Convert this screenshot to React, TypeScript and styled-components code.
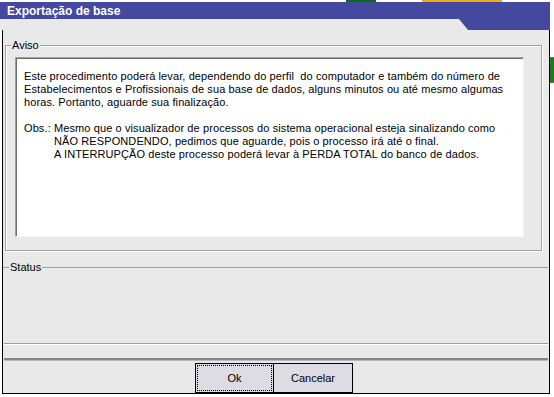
import React from 'react';
import styled, { createGlobalStyle } from 'styled-components';

const GlobalStyle = createGlobalStyle`
  html, body {
    margin: 0;
    padding: 0;
    background: #ffffff;
  }
  body {
    font-family: 'Liberation Sans', Arial, sans-serif;
    font-size: 11px;
    color: #000000;
    overflow: hidden;
  }
`;

const Screen = styled.div`
  position: relative;
  width: 554px;
  height: 397px;
  padding-top: 2px;
  box-sizing: border-box;
  background: #ffffff;
  overflow: hidden;
`;

// bits of the desktop behind the dialog
const Blot = styled.div<{ $x: number; $y: number; $w: number; $h: number; $color: string; $round?: boolean }>`
  position: absolute;
  left: ${(p) => p.$x}px;
  top: ${(p) => p.$y}px;
  width: ${(p) => p.$w}px;
  height: ${(p) => p.$h}px;
  background: ${(p) => p.$color};
  border-radius: ${(p) => (p.$round ? '50%' : '0')};
`;

const Dialog = styled.div`
  position: relative;
  z-index: 1;
  width: 550px;
  display: flex;
  flex-direction: column;
`;

const TitleBar = styled.div`
  height: 17px;
  background: #44489e;
  color: #ffffff;
  font-weight: bold;
  font-size: 12px;
  display: flex;
  align-items: center;
  padding-left: 7px;
`;

const TabStrip = styled.div`
  height: 11px;
  background: #e9e9e9;
  display: flex;
  justify-content: flex-end;
`;

const Tab = styled.div`
  width: 91px;
  height: 100%;
  background: #44489e;
  clip-path: polygon(0 0, 100% 0, 100% 100%, 9px 100%);
`;

const Body = styled.div`
  margin-left: 2px;
  width: 548px;
  height: 364px;
  box-sizing: border-box;
  border: 1px solid #000000;
  border-top: none;
  background: #e9e9e9;
  display: flex;
  flex-direction: column;
`;

const Group = styled.div`
  position: relative;
  margin: 15px 0 0 2px;
  width: 537px;
  height: 207px;
  box-sizing: border-box;
  border: 1px solid #a0a0a0;
  box-shadow: inset 1px 1px 0 #ffffff, 1px 1px 0 #ffffff;
  padding: 11px 17px 13px 9px;
`;

const Caption = styled.span<{ $left: number }>`
  position: absolute;
  top: -7px;
  left: ${(p) => p.$left}px;
  padding: 0 1px;
  line-height: 13px;
  background: #e9e9e9;
`;

const Notice = styled.div`
  height: 100%;
  box-sizing: border-box;
  background: #ffffff;
  border: 1px solid;
  border-color: #a0a0a0 #f4f4f4 #f4f4f4 #a0a0a0;
  box-shadow: inset 1px 1px 0 #6e6e6e;
  padding: 12px 8px 0 8px;
  line-height: 13px;
  letter-spacing: 0.1px;
`;

const Line = styled.div`
  white-space: pre;
`;

const Gap = styled.div`
  height: 13px;
`;

const ObsRow = styled.div`
  display: flex;
`;

const ObsLabel = styled.span`
  width: 30px;
  flex: none;
`;

const StatusSection = styled.div`
  position: relative;
  margin: 16px 1px 0 0;
  height: 75px;
  border-top: 1px solid #a0a0a0;
`;

const Rule = styled.div<{ $heavy?: boolean }>`
  margin: 0 1px;
  height: ${(p) => (p.$heavy ? '2px' : '1px')};
  background: ${(p) => (p.$heavy ? '#888888' : '#a0a0a0')};
  border-bottom: 1px solid ${(p) => (p.$heavy ? '#b8b8b8' : '#ffffff')};
`;

const FooterGap = styled.div`
  height: 13px;
`;

const Buttons = styled.div`
  display: flex;
  padding: 2px 0 0 192px;
`;

const Button = styled.button<{ $focused?: boolean; $joined?: boolean }>`
  width: 79px;
  height: 30px;
  box-sizing: border-box;
  background: #dcdce2;
  border: 1px solid #000000;
  border-left: ${(p) => (p.$joined ? 'none' : '1px solid #000000')};
  border-radius: 0;
  font-family: 'Liberation Sans', Arial, sans-serif;
  font-size: 11px;
  color: #000000;
  padding: 0;
  outline: ${(p) => (p.$focused ? '1px dotted #000000' : 'none')};
  outline-offset: -3px;
  cursor: pointer;
`;

export default function App() {
  return (
    <Screen>
      <GlobalStyle />
      <Blot $x={346} $y={0} $w={30} $h={4} $color="#0f6a14" />
      <Blot $x={422} $y={0} $w={80} $h={4} $color="#f0a818" />
      <Blot $x={540} $y={57} $w={24} $h={26} $color="#1e7a1e" $round />

      <Dialog>
        <TitleBar>Exportação de base</TitleBar>
        <TabStrip>
          <Tab />
        </TabStrip>
        <Body>
          <Group>
            <Caption $left={5}>Aviso</Caption>
            <Notice>
              <Line>Este procedimento poderá levar, dependendo do perfil  do computador e também do número de</Line>
              <Line>Estabelecimentos e Profissionais de sua base de dados, alguns minutos ou até mesmo algumas</Line>
              <Line>horas. Portanto, aguarde sua finalização.</Line>
              <Gap />
              <ObsRow>
                <ObsLabel>Obs.:</ObsLabel>
                <div>
                  <Line>Mesmo que o visualizador de processos do sistema operacional esteja sinalizando como</Line>
                  <Line>NÃO RESPONDENDO, pedimos que aguarde, pois o processo irá até o final.</Line>
                  <Line>A INTERRUPÇÃO deste processo poderá levar à PERDA TOTAL do banco de dados.</Line>
                </div>
              </ObsRow>
            </Notice>
          </Group>

          <StatusSection>
            <Caption $left={6}>Status</Caption>
          </StatusSection>

          <Rule />
          <FooterGap />
          <Rule $heavy />

          <Buttons>
            <Button $focused>Ok</Button>
            <Button $joined>Cancelar</Button>
          </Buttons>
        </Body>
      </Dialog>
    </Screen>
  );
}
